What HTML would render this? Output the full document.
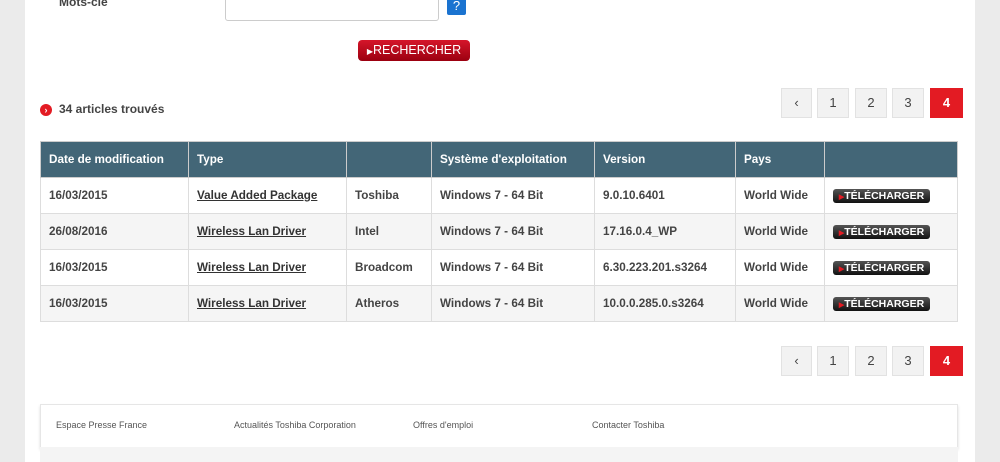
<!DOCTYPE html><html><head><meta charset="utf-8"><style>
body{margin:0;width:1000px;height:462px;background:#ebebeb;font-family:"Liberation Sans",Arial,sans-serif;overflow:hidden;position:relative}
.main{position:absolute;left:25px;top:0;width:950px;height:462px;background:#fff}
.abs{position:absolute}
.pg{position:absolute;height:30px;background:#f2f2f2;border:1px solid #e2e2e2;box-sizing:border-box;font-size:13px;color:#444;text-align:center;line-height:28px}
.pg.on{background:#e31b23;border-color:#e31b23;color:#fff;font-weight:bold}
table{position:absolute;left:40px;top:141px;width:918px;border-collapse:collapse;font-size:11.7px;color:#333}
th{background:#436677;color:#fff;text-align:left;height:35px;padding:0 8px;border:1px solid #ccc;font-weight:bold}
td{height:35px;padding:0 8px;border:1px solid #ddd;font-weight:bold;color:#444}
tr.g td{background:#f5f5f5}
td a{color:#333;text-decoration:underline}
.dl{display:inline-block;width:97px;height:14px;border-radius:3px;background:linear-gradient(#555,#111);color:#fff;font-size:10.5px;line-height:14px;text-align:center;font-weight:bold}
.dl b{color:#e31b23;font-size:7px}
.ft{position:absolute;font-size:9px;color:#555;top:420px}
</style></head><body>
<div class="main"></div>
<div class="abs" style="left:59px;top:-5px;font-size:12px;font-weight:bold;color:#444">Mots-clé</div>
<div class="abs" style="left:225px;top:-6px;width:212px;height:25px;border:1px solid #ccc;border-radius:3px;background:#fff"></div>
<div class="abs" style="left:447px;top:-3px;width:19px;height:18px;background:#1a73d0;color:#fff;font-size:13px;text-align:center;line-height:18px;border-radius:2px">?</div>
<div class="abs" style="left:358px;top:40px;width:112px;height:21px;border-radius:4px;background:linear-gradient(#d5162a,#9b0010);color:#fff;font-size:12.5px;line-height:21px;text-align:center"><span style="font-size:8px">▶</span>RECHERCHER</div>
<div class="abs" style="left:40px;top:104px;width:12px;height:12px;border-radius:50%;background:#e31b23;color:#fff;font-size:9px;line-height:12px;text-align:center;font-weight:bold">›</div>
<div class="abs" style="left:59px;top:102px;font-size:12px;font-weight:bold;color:#444">34 articles trouvés</div>
<div class="pg" style="left:781px;top:88px;width:31px">‹</div><div class="pg" style="left:817px;top:88px;width:32px">1</div><div class="pg" style="left:855px;top:88px;width:32px">2</div><div class="pg" style="left:892px;top:88px;width:32px">3</div><div class="pg on" style="left:930px;top:88px;width:33px">4</div>
<table>
<tr><th style="width:131px">Date de modification</th><th style="width:141px">Type</th><th style="width:68px"></th><th style="width:146px">Système d'exploitation</th><th style="width:124px">Version</th><th style="width:72px">Pays</th><th></th></tr>
<tr><td>16/03/2015</td><td><a>Value Added Package</a></td><td>Toshiba</td><td>Windows 7 - 64 Bit</td><td>9.0.10.6401</td><td>World Wide</td><td><span class="dl"><b>▶</b>TÉLÉCHARGER</span></td></tr>
<tr class="g"><td>26/08/2016</td><td><a>Wireless Lan Driver</a></td><td>Intel</td><td>Windows 7 - 64 Bit</td><td>17.16.0.4_WP</td><td>World Wide</td><td><span class="dl"><b>▶</b>TÉLÉCHARGER</span></td></tr>
<tr><td>16/03/2015</td><td><a>Wireless Lan Driver</a></td><td>Broadcom</td><td>Windows 7 - 64 Bit</td><td>6.30.223.201.s3264</td><td>World Wide</td><td><span class="dl"><b>▶</b>TÉLÉCHARGER</span></td></tr>
<tr class="g"><td>16/03/2015</td><td><a>Wireless Lan Driver</a></td><td>Atheros</td><td>Windows 7 - 64 Bit</td><td>10.0.0.285.0.s3264</td><td>World Wide</td><td><span class="dl"><b>▶</b>TÉLÉCHARGER</span></td></tr>
</table>
<div class="pg" style="left:781px;top:346px;width:31px">‹</div><div class="pg" style="left:817px;top:346px;width:32px">1</div><div class="pg" style="left:855px;top:346px;width:32px">2</div><div class="pg" style="left:892px;top:346px;width:32px">3</div><div class="pg on" style="left:930px;top:346px;width:33px">4</div>
<div class="abs" style="left:40px;top:404px;width:916px;height:42px;border:1px solid #e6e6e6;box-shadow:0 2px 3px #ddd;background:#fff"></div>
<div class="abs" style="left:40px;top:447px;width:918px;height:15px;background:#f4f4f4"></div>
<div class="ft" style="left:56px">Espace Presse France</div>
<div class="ft" style="left:234px">Actualités Toshiba Corporation</div>
<div class="ft" style="left:413px">Offres d'emploi</div>
<div class="ft" style="left:592px">Contacter Toshiba</div>
</body></html>
